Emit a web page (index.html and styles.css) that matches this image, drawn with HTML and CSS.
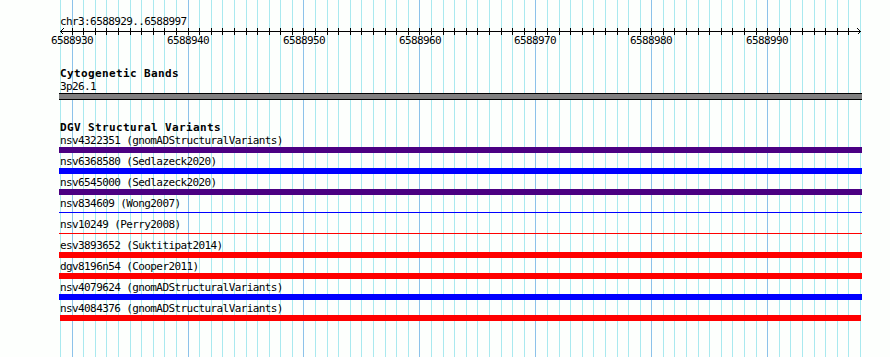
FILE: index.html
```html
<!DOCTYPE html>
<html lang="en">
<head>
  <meta charset="UTF-8" />
  <title>chr3:6588929..6588997</title>
  <link rel="stylesheet" href="styles.css">
</head>
<body>
  <div class="panel">
    <!-- base grid, one line per bp -->
    <svg class="grid" width="890" height="357" shape-rendering="crispEdges">
      <path class="grid-minor" d="M60.5 0V357M83.5 0V357M95.5 0V357M106.5 0V357M118.5 0V357M130.5 0V357M141.5 0V357M153.5 0V357M164.5 0V357M176.5 0V357M199.5 0V357M211.5 0V357M222.5 0V357M234.5 0V357M246.5 0V357M257.5 0V357M269.5 0V357M280.5 0V357M292.5 0V357M315.5 0V357M327.5 0V357M338.5 0V357M350.5 0V357M361.5 0V357M373.5 0V357M385.5 0V357M396.5 0V357M408.5 0V357M431.5 0V357M443.5 0V357M454.5 0V357M466.5 0V357M477.5 0V357M489.5 0V357M501.5 0V357M512.5 0V357M524.5 0V357M547.5 0V357M559.5 0V357M570.5 0V357M582.5 0V357M593.5 0V357M605.5 0V357M617.5 0V357M628.5 0V357M640.5 0V357M663.5 0V357M674.5 0V357M686.5 0V357M698.5 0V357M709.5 0V357M721.5 0V357M732.5 0V357M744.5 0V357M756.5 0V357M779.5 0V357M790.5 0V357M802.5 0V357M814.5 0V357M825.5 0V357M837.5 0V357M848.5 0V357M860.5 0V357"/>
      <path class="grid-major" d="M72.5 0V357M188.5 0V357M303.5 0V357M419.5 0V357M535.5 0V357M651.5 0V357M767.5 0V357"/>
    </svg>

    <div class="ruler">
      <div class="seg-label">chr3:6588929..6588997</div>
      <svg class="scale" width="890" height="24" shape-rendering="crispEdges">
        <path class="scale-line" d="M60 3.5H861M63.5 0.5L60.5 3.5L63.5 6.5M857.5 0.5L860.5 3.5L857.5 6.5"/>
        <path class="scale-line" d="M72.5 0v7M83.5 0v7M95.5 0v7M106.5 0v7M118.5 0v7M130.5 0v7M141.5 0v7M153.5 0v7M164.5 0v7M176.5 0v7M188.5 0v7M199.5 0v7M211.5 0v7M222.5 0v7M234.5 0v7M246.5 0v7M257.5 0v7M269.5 0v7M280.5 0v7M292.5 0v7M303.5 0v7M315.5 0v7M327.5 0v7M338.5 0v7M350.5 0v7M361.5 0v7M373.5 0v7M385.5 0v7M396.5 0v7M408.5 0v7M419.5 0v7M431.5 0v7M443.5 0v7M454.5 0v7M466.5 0v7M477.5 0v7M489.5 0v7M501.5 0v7M512.5 0v7M524.5 0v7M535.5 0v7M547.5 0v7M559.5 0v7M570.5 0v7M582.5 0v7M593.5 0v7M605.5 0v7M617.5 0v7M628.5 0v7M640.5 0v7M651.5 0v7M663.5 0v7M674.5 0v7M686.5 0v7M698.5 0v7M709.5 0v7M721.5 0v7M732.5 0v7M744.5 0v7M756.5 0v7M767.5 0v7M779.5 0v7M790.5 0v7M802.5 0v7M814.5 0v7M825.5 0v7M837.5 0v7M848.5 0v7"/>
        <text class="tick-label" x="72" y="16">6588930</text>
        <text class="tick-label" x="188" y="16">6588940</text>
        <text class="tick-label" x="304" y="16">6588950</text>
        <text class="tick-label" x="420" y="16">6588960</text>
        <text class="tick-label" x="535" y="16">6588970</text>
        <text class="tick-label" x="651" y="16">6588980</text>
        <text class="tick-label" x="767" y="16">6588990</text>
      </svg>
    </div>

    <section class="track track-cyto">
      <h3 class="track-title">Cytogenetic Bands</h3>
      <div class="feat-label">3p26.1</div>
      <div class="band"></div>
    </section>

    <section class="track track-dgv">
      <h3 class="track-title">DGV Structural Variants</h3>
      <div class="feature">
        <div class="feat-label">nsv4322351 (gnomADStructuralVariants)</div>
        <div class="bar bar-indigo"></div>
      </div>
      <div class="feature">
        <div class="feat-label">nsv6368580 (Sedlazeck2020)</div>
        <div class="bar bar-blue"></div>
      </div>
      <div class="feature">
        <div class="feat-label">nsv6545000 (Sedlazeck2020)</div>
        <div class="bar bar-indigo"></div>
      </div>
      <div class="feature">
        <div class="feat-label">nsv834609 (Wong2007)</div>
        <div class="bar bar-thin bar-blue"></div>
      </div>
      <div class="feature">
        <div class="feat-label">nsv10249 (Perry2008)</div>
        <div class="bar bar-thin bar-red"></div>
      </div>
      <div class="feature">
        <div class="feat-label">esv3893652 (Suktitipat2014)</div>
        <div class="bar bar-red"></div>
      </div>
      <div class="feature">
        <div class="feat-label">dgv8196n54 (Cooper2011)</div>
        <div class="bar bar-red"></div>
      </div>
      <div class="feature">
        <div class="feat-label">nsv4079624 (gnomADStructuralVariants)</div>
        <div class="bar bar-blue"></div>
      </div>
      <div class="feature">
        <div class="feat-label">nsv4084376 (gnomADStructuralVariants)</div>
        <div class="bar bar-red bar-inner"></div>
      </div>
    </section>
  </div>
</body>
</html>
```

FILE: styles.css
```css
body {
  margin: 0;
  background-color: #fdfffd;
  font-family: "DejaVu Sans Mono", monospace;
  color: #000;
}
.panel {
  position: relative;
  width: 890px;
  height: 357px;
  overflow: hidden;
}
.grid {
  position: absolute;
  top: 0;
  left: 0;
}
.grid-minor {
  stroke: #a9e9ef;
  stroke-width: 1;
}
.grid-major {
  stroke: #8cc2ea;
  stroke-width: 1;
}
.ruler,
.track {
  position: relative;
}
.seg-label {
  padding-top: 15px;
  padding-left: 60px;
  height: 13px;
  line-height: 13px;
  font-size: 11px;
  letter-spacing: -0.6px;
}
.scale {
  display: block;
}
.scale-line {
  fill: none;
  stroke: #000;
  stroke-width: 1;
}
.tick-label {
  font-family: "DejaVu Sans Mono", monospace;
  font-size: 11px;
  letter-spacing: -0.6px;
  text-anchor: middle;
  fill: #000;
}
.track-cyto {
  margin-top: 15px;
}
.track-dgv {
  margin-top: 21px;
}
.track-title {
  margin: 0;
  padding-left: 60px;
  font-size: 11px;
  font-weight: bold;
  line-height: 13px;
  letter-spacing: 0.38px;
}
.feat-label {
  padding-left: 60px;
  font-size: 11px;
  line-height: 13px;
  height: 13px;
  letter-spacing: -0.6px;
  white-space: nowrap;
}
.band {
  margin-left: 59px;
  width: 803px;
  height: 5px;
  background-color: #808080;
  border-top: 1px solid #000;
  border-bottom: 1px solid #000;
}
.feature {
  height: 21px;
}
.bar {
  margin-left: 59px;
  width: 803px;
  height: 6px;
}
.bar-thin {
  height: 1px;
  margin-top: 2px;
}
.bar-inner {
  margin-left: 60px;
  width: 801px;
}
.bar-indigo {
  background-color: #4b0082;
}
.bar-blue {
  background-color: #0000ff;
}
.bar-red {
  background-color: #ff0000;
}
```
